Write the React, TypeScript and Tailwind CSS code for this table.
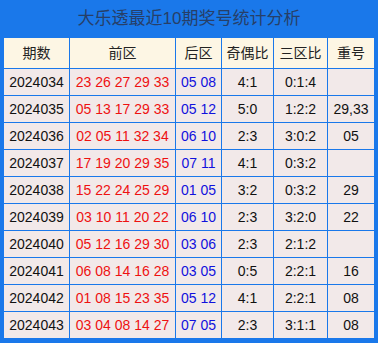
import React from 'react';

type Row = {
  issue: string;
  front: string;
  back: string;
  oddEven: string;
  zones: string;
  repeat: string;
};

const rows: Row[] = [
  { issue: '2024034', front: '23 26 27 29 33', back: '05 08', oddEven: '4:1', zones: '0:1:4', repeat: '' },
  { issue: '2024035', front: '05 13 17 29 33', back: '05 12', oddEven: '5:0', zones: '1:2:2', repeat: '29,33' },
  { issue: '2024036', front: '02 05 11 32 34', back: '06 10', oddEven: '2:3', zones: '3:0:2', repeat: '05' },
  { issue: '2024037', front: '17 19 20 29 35', back: '07 11', oddEven: '4:1', zones: '0:3:2', repeat: '' },
  { issue: '2024038', front: '15 22 24 25 29', back: '01 05', oddEven: '3:2', zones: '0:3:2', repeat: '29' },
  { issue: '2024039', front: '03 10 11 20 22', back: '06 10', oddEven: '2:3', zones: '3:2:0', repeat: '22' },
  { issue: '2024040', front: '05 12 16 29 30', back: '03 06', oddEven: '2:3', zones: '2:1:2', repeat: '' },
  { issue: '2024041', front: '06 08 14 16 28', back: '03 05', oddEven: '0:5', zones: '2:2:1', repeat: '16' },
  { issue: '2024042', front: '01 08 15 23 35', back: '05 12', oddEven: '4:1', zones: '2:2:1', repeat: '08' },
  { issue: '2024043', front: '03 04 08 14 27', back: '07 05', oddEven: '2:3', zones: '3:1:1', repeat: '08' },
];

const headers = ['期数', '前区', '后区', '奇偶比', '三区比', '重号'];

const font = { fontFamily: '"Liberation Sans", "Noto Sans CJK SC", sans-serif' };

export default function App() {
  return (
    <div className="w-[378px] h-[343px] bg-[#1a78ea] px-[4px] pb-[5px]" style={font}>
      <div className="h-[38px] flex items-center justify-center text-[17px] text-[#273f68]">
        大乐透最近10期奖号统计分析
      </div>
      <div className="grid grid-cols-[65px_105px_45px_51px_53px_46px] gap-px">
        {headers.map(h => (
          <div key={h} className="h-[30px] flex items-center justify-center bg-[#fdf6e4] text-[14px] text-[#222]">
            {h}
          </div>
        ))}
        {rows.map(r => (
          <React.Fragment key={r.issue}>
            <div className="h-[26px] flex items-center justify-center bg-[#f2e9e9] text-[14px] text-[#111]">{r.issue}</div>
            <div className="h-[26px] flex items-center justify-center bg-[#f2e9e9] text-[14px] text-[#ee1111]">{r.front}</div>
            <div className="h-[26px] flex items-center justify-center bg-[#f2e9e9] text-[14px] text-[#1111dd]">{r.back}</div>
            <div className="h-[26px] flex items-center justify-center bg-[#f2e9e9] text-[14px] text-[#111]">{r.oddEven}</div>
            <div className="h-[26px] flex items-center justify-center bg-[#f2e9e9] text-[14px] text-[#111]">{r.zones}</div>
            <div className="h-[26px] flex items-center justify-center bg-[#f2e9e9] text-[14px] text-[#111]">{r.repeat}</div>
          </React.Fragment>
        ))}
      </div>
    </div>
  );
}
